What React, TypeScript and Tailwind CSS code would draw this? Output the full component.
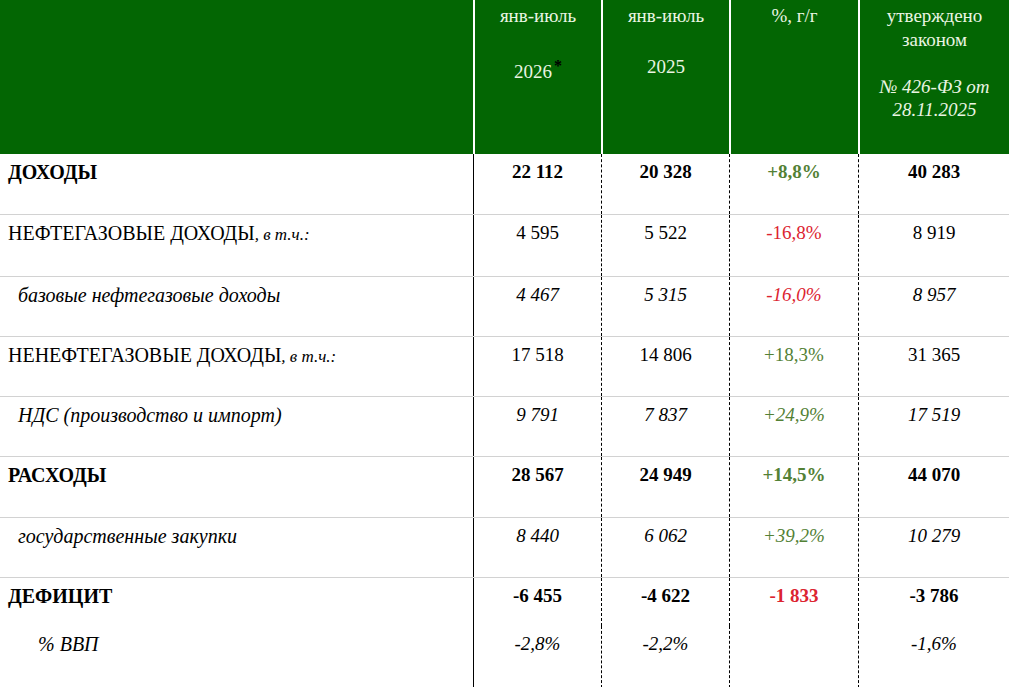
import React from "react";

type Tone = "plain" | "up" | "down";

interface Row {
  label: React.ReactNode;
  values: [string, string, string, string];
  tone: Tone;
  bold?: boolean;
  italic?: boolean;
  indent?: string;
  height: string;
  divider?: boolean;
}

const toneClass: Record<Tone, string> = {
  plain: "text-black",
  up: "text-[#538135]",
  down: "text-[#dc2430]",
};

const note = <span className="italic text-[17px]">, в т.ч.:</span>;

const rows: Row[] = [
  { label: "ДОХОДЫ", values: ["22 112", "20 328", "+8,8%", "40 283"], tone: "up", bold: true, height: "h-[61px]", divider: true },
  { label: <>НЕФТЕГАЗОВЫЕ ДОХОДЫ{note}</>, values: ["4 595", "5 522", "-16,8%", "8 919"], tone: "down", height: "h-[62px]", divider: true },
  { label: "базовые нефтегазовые доходы", values: ["4 467", "5 315", "-16,0%", "8 957"], tone: "down", italic: true, indent: "pl-[18px]", height: "h-[60px]", divider: true },
  { label: <>НЕНЕФТЕГАЗОВЫЕ ДОХОДЫ{note}</>, values: ["17 518", "14 806", "+18,3%", "31 365"], tone: "up", height: "h-[60px]", divider: true },
  { label: "НДС (производство и импорт)", values: ["9 791", "7 837", "+24,9%", "17 519"], tone: "up", italic: true, indent: "pl-[18px]", height: "h-[60px]", divider: true },
  { label: "РАСХОДЫ", values: ["28 567", "24 949", "+14,5%", "44 070"], tone: "up", bold: true, height: "h-[61px]", divider: true },
  { label: "государственные закупки", values: ["8 440", "6 062", "+39,2%", "10 279"], tone: "up", italic: true, indent: "pl-[18px]", height: "h-[60px]", divider: true },
  { label: "ДЕФИЦИТ", values: ["-6 455", "-4 622", "-1 833", "-3 786"], tone: "down", bold: true, height: "h-[48px]" },
  { label: "% ВВП", values: ["-2,8%", "-2,2%", "", "-1,6%"], tone: "plain", italic: true, indent: "pl-[38px]", height: "h-[62px]" },
];

const grid = "grid grid-cols-[473px_128px_128px_129px_1fr]";

function Header() {
  return (
    <div className={`${grid} h-[154px] bg-[#036603] text-[#eaf5e2] text-[19px] leading-[23.5px] text-center`}>
      <div />
      <div className="border-l-2 border-white pt-[4px]">
        <div>янв-июль</div>
        <div className="mt-[32px]">
          2026<sup className="relative -top-[7px] ml-[2px] text-[16px] font-bold text-black">*</sup>
        </div>
      </div>
      <div className="border-l-2 border-white pt-[4px]">
        <div>янв-июль</div>
        <div className="mt-[27px]">2025</div>
      </div>
      <div className="border-l-2 border-white pt-[4px]">
        <div>%, г/г</div>
      </div>
      <div className="border-l-2 border-white pt-[4px]">
        <div>утверждено</div>
        <div>законом</div>
        <div className="mt-[23.5px] italic">№ 426-ФЗ от</div>
        <div className="italic">28.11.2025</div>
      </div>
    </div>
  );
}

function TableRow({ row }: { row: Row }) {
  const weight = row.bold ? "font-bold" : "font-normal";
  const style = row.italic ? "italic" : "";
  return (
    <div className={`${grid} ${row.height} ${row.divider ? "border-b border-[#d2d2d2]" : ""}`}>
      <div className={`pt-[7px] text-[20px] ${row.indent ?? "pl-2"} ${weight} ${style} text-black`}>{row.label}</div>
      {row.values.map((v, i) => (
        <div
          key={i}
          className={`pt-[7px] text-center ${weight} ${style} ${i === 0 ? "border-l border-black" : "border-l border-dashed border-black"} ${i === 2 ? toneClass[row.tone] : "text-black"}`}
        >
          {v}
        </div>
      ))}
    </div>
  );
}

export default function App() {
  return (
    <div className="w-[1009px] h-[687px] overflow-hidden bg-white font-['Liberation_Serif',serif] text-[19px] leading-[22px]">
      <Header />
      {rows.map((row, i) => (
        <TableRow key={i} row={row} />
      ))}
    </div>
  );
}
